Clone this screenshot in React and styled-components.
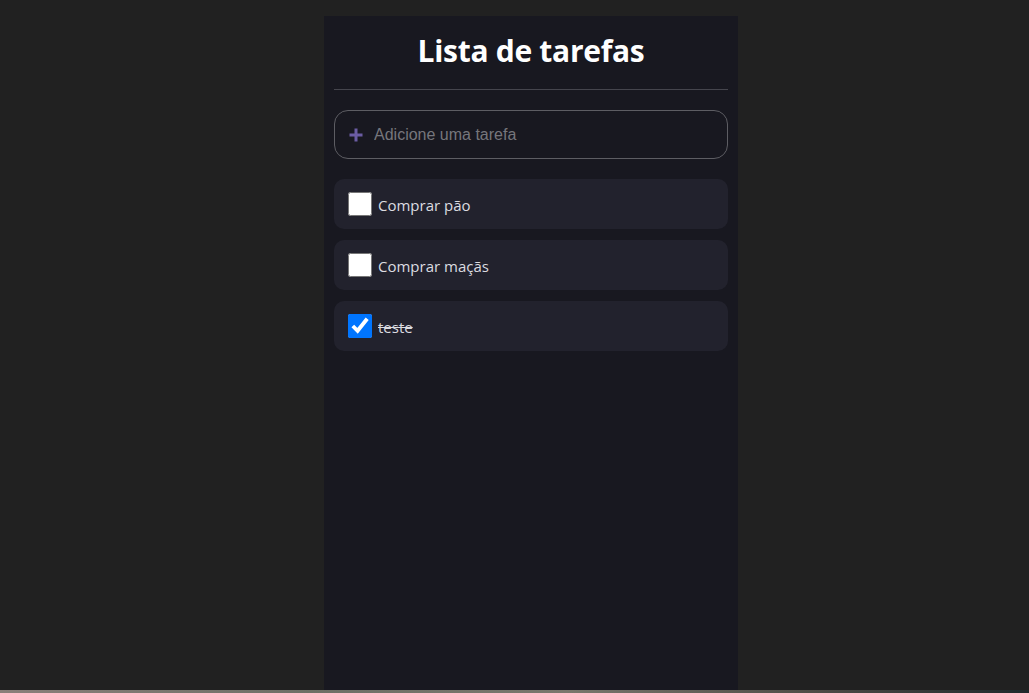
import React, { useState } from "react";
import styled, { createGlobalStyle } from "styled-components";

const Global = createGlobalStyle`
  html, body { margin: 0; padding: 0; background: #212121; }
  body { font-family: "Open Sans", "Noto Sans", sans-serif; }
  * { box-sizing: border-box; }
`;

const Page = styled.div`
  min-height: 693px;
  display: flex;
  flex-direction: column;
  align-items: center;
  padding-top: 16px;
`;

const Main = styled.div`
  width: 100%;
  display: flex;
  justify-content: center;
  padding-left: 33px;
`;

const Panel = styled.main`
  width: 414px;
  height: 674px;
  background: #181820;
  padding: 0 10px;
  display: flex;
  flex-direction: column;
`;

const Title = styled.h1`
  margin: 0;
  height: 74px;
  padding-bottom: 5px;
  display: flex;
  align-items: center;
  justify-content: center;
  color: #ffffff;
  font-size: 30px;
  font-weight: 700;
  font-family: "Open Sans", "Noto Sans", sans-serif;
  letter-spacing: -0.3px;
  border-bottom: 1px solid #45454d;
`;

const InputWrap = styled.label`
  margin-top: 20px;
  height: 49px;
  border: 1px solid #5d5d63;
  border-radius: 14px;
  display: flex;
  align-items: center;
  padding-left: 13px;
  gap: 10px;
`;

const Input = styled.input`
  flex: 1;
  background: transparent;
  border: none;
  outline: none;
  color: #ddd;
  padding: 0;
  font-family: "Liberation Sans", Arial, sans-serif;
  font-size: 16px;
  &::placeholder { color: #76767c; }
`;

const List = styled.ul`
  list-style: none;
  margin: 20px 0 0;
  padding: 0;
  display: flex;
  flex-direction: column;
  gap: 11px;
`;

const Item = styled.li`
  height: 50px;
  background: #22222d;
  border-radius: 10px;
  display: flex;
  align-items: center;
  padding-left: 14px;
  gap: 6px;
`;

const Check = styled.input`
  width: 24px;
  height: 24px;
  margin: 0;
  accent-color: #0075ff;
`;

const Label = styled.span`
  color: #dcdce0;
  font-size: 15px;
  padding-top: 1px;
  font-family: "Open Sans", "Noto Sans", sans-serif;
  text-decoration: ${(p) => (p.$done ? "line-through" : "none")};
`;

const BottomStrip = styled.div`
  width: 100%;
  height: 3px;
  background: linear-gradient(90deg, #8a7f7a, #6e6f66 30%, #7a776d 55%, #4d4a45 80%, #1e2a2c);
`;

const PlusIcon = () => (
  <svg width="16" height="16" viewBox="0 0 16 16">
    <path d="M8 1.5v13M1.5 8h13" stroke="#6b5ca3" strokeWidth="3" strokeLinecap="butt" />
  </svg>
);

export default function App() {
  const [tasks, setTasks] = useState([
    { id: 1, text: "Comprar pão", done: false },
    { id: 2, text: "Comprar maçãs", done: false },
    { id: 3, text: "teste", done: true },
  ]);
  const toggle = (id) =>
    setTasks((t) => t.map((x) => (x.id === id ? { ...x, done: !x.done } : x)));
  return (
    <>
      <Global />
      <Page>
        <Main>
          <Panel>
            <Title>Lista de tarefas</Title>
            <InputWrap>
              <PlusIcon />
              <Input placeholder="Adicione uma tarefa" />
            </InputWrap>
            <List>
              {tasks.map((t) => (
                <Item key={t.id}>
                  <Check type="checkbox" checked={t.done} onChange={() => toggle(t.id)} />
                  <Label $done={t.done}>{t.text}</Label>
                </Item>
              ))}
            </List>
          </Panel>
        </Main>
        <BottomStrip />
      </Page>
    </>
  );
}
